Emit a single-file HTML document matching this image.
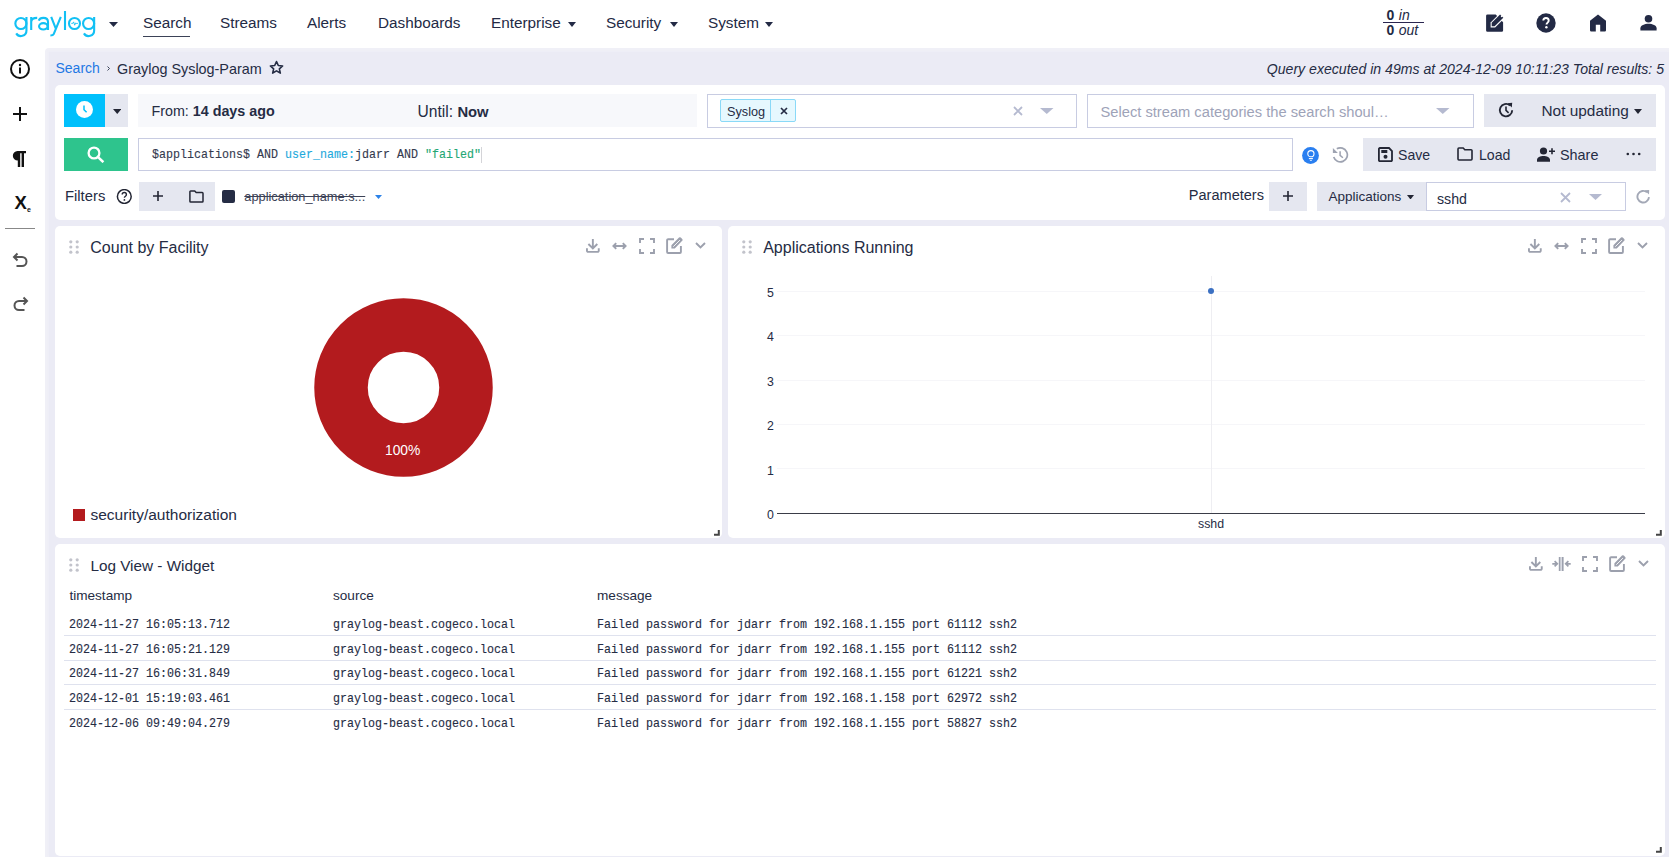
<!DOCTYPE html>
<html><head><meta charset="utf-8">
<style>
*{box-sizing:border-box}
html,body{margin:0;padding:0}
body{width:1669px;height:857px;overflow:hidden;background:#fff;font-family:"Liberation Sans",sans-serif;color:#252c44;position:relative}
.a{position:absolute;white-space:nowrap;line-height:1}
.box{position:absolute}
.nav{font-size:15.3px;top:15px;color:#232a45}
.ico{position:absolute;display:block}
.mono{font-family:"Liberation Mono",monospace;font-size:13px!important;transform:scaleX(0.8974);transform-origin:0 0;-webkit-text-stroke:0.12px currentColor}
</style></head><body>
<!-- NAVBAR -->
<div class="box" style="left:0;top:0;width:1669px;height:48px;background:#fff"></div>
<svg class="ico" style="left:0;top:0" width="100" height="40" viewBox="0 0 100 40"><g stroke="#12c0f4" stroke-width="2.1" fill="none">
<circle cx="20.9" cy="23.5" r="5.55"/><path d="M26.45 16.9V30.4A5.55 5.55 0 0 1 16.2 33.4"/>
<path d="M31.2 30V16.9M31.2 22C31.2 19 33.3 17.9 37.2 17.9"/>
<path d="M38.7 20.6C39.5 18.6 41 17.9 43.3 17.9C46.6 17.9 48 19.6 48 22V30"/><ellipse cx="43.3" cy="26.35" rx="4.25" ry="3.2"/>
<path d="M51.2 16.9L56 29.2M60.8 16.9L53.7 34.1Q53.1 35.5 50.4 35.5"/>
<path d="M65 11V30"/>
<circle cx="74.5" cy="23.5" r="5.5"/>
<circle cx="88.6" cy="23.5" r="5.55"/><path d="M94.15 16.9V30.4A5.55 5.55 0 0 1 83.9 33.4"/>
</g><path d="M71.3 23.4h1.5l.8-1.5 1.1 3.3.9-2.2.5.4h1.8" stroke="#12c0f4" stroke-width="0.9" fill="none" stroke-linejoin="round"/></svg>
<svg class="ico" style="left:109px;top:22px" width="9" height="5" viewBox="0 0 9 5"><path d="M0 0h9L4.5 5z" fill="#232a45"/></svg>
<div class="a nav" style="left:143px">Search</div>
<div class="box" style="left:143px;top:35.5px;width:47px;height:1px;background:#3b4257"></div>
<div class="a nav" style="left:220px">Streams</div>
<div class="a nav" style="left:307px">Alerts</div>
<div class="a nav" style="left:378px">Dashboards</div>
<div class="a nav" style="left:491px">Enterprise</div>
<svg class="ico" style="left:568px;top:22px" width="8" height="5" viewBox="0 0 8 5"><path d="M0 0h8L4 5z" fill="#232a45"/></svg>
<div class="a nav" style="left:606px">Security</div>
<svg class="ico" style="left:670px;top:22px" width="8" height="5" viewBox="0 0 8 5"><path d="M0 0h8L4 5z" fill="#232a45"/></svg>
<div class="a nav" style="left:708px">System</div>
<svg class="ico" style="left:765px;top:22px" width="8" height="5" viewBox="0 0 8 5"><path d="M0 0h8L4 5z" fill="#232a45"/></svg>

<!-- SIDEBAR -->
<div class="box" style="left:0;top:48px;width:45px;height:809px;background:#fff"></div>

<!-- CONTENT BG -->
<div class="box" style="left:45px;top:48px;width:1624px;height:809px;background:#f0f0f7;border-top-left-radius:4px"></div><div class="box" style="left:49px;top:52px;width:1620px;height:805px;background:#ebebf5;box-shadow:-1px -1px 2px #ededf6"></div>


<!-- NAV RIGHT -->
<div class="a" style="left:1386.5px;top:7.9px;font-size:14px;color:#232a45"><b style="font-weight:700;letter-spacing:0.6px">0</b> <i>in</i></div>
<div class="box" style="left:1383px;top:22px;width:41px;height:1px;background:#2a2650"></div>
<div class="a" style="left:1386.5px;top:23px;font-size:14px;color:#232a45"><b style="font-weight:700;letter-spacing:0.6px">0</b> <i>out</i></div>
<svg class="ico" style="left:1485px;top:12px" width="21" height="21" viewBox="0 0 21 21"><path d="M2.5 2.4H10.7L18.1 10.3V18.4a1.4 1.4 0 0 1-1.4 1.4H2.5a1.4 1.4 0 0 1-1.4-1.4V3.8a1.4 1.4 0 0 1 1.4-1.4z" fill="#232a45"/><path d="M5.6 15.4V10.4L15.1 0.9l4.75 4.75L10.1 15.4z" fill="#fff"/><path d="M6.7 14.3V10.86L15.1 2.46l3.19 3.19L9.64 14.3z" fill="#232a45"/><circle cx="16.6" cy="4.4" r="0.8" fill="#fff"/></svg>
<svg class="ico" style="left:1536px;top:13px" width="20" height="20" viewBox="0 0 20 20"><circle cx="10" cy="10" r="9.7" fill="#232a45"/><path d="M7.3 7.6a2.7 2.7 0 0 1 5.4.1c0 1.9-2.2 1.9-2.2 3.8" stroke="#fff" stroke-width="1.9" fill="none"/><circle cx="10.4" cy="14.3" r="1.2" fill="#fff"/></svg>
<svg class="ico" style="left:1589px;top:14px" width="18" height="18" viewBox="0 0 18 18"><path d="M1 6.8L9 0.5l8 6.3v9.5a1.2 1.2 0 0 1-1.2 1.2h-4.6v-6.7h-4.4v6.7H2.2A1.2 1.2 0 0 1 1 16.3z" fill="#232a45"/></svg>
<svg class="ico" style="left:1640px;top:15px" width="17" height="16" viewBox="0 0 17 16"><circle cx="8.5" cy="3.8" r="3.8" fill="#232a45"/><path d="M0.4 13.2c0-2.6 4.2-4.4 8.1-4.4s8.1 1.8 8.1 4.4v2.4H0.4z" fill="#232a45"/></svg>

<!-- SIDEBAR ICONS -->
<svg class="ico" style="left:10px;top:59px" width="20" height="20" viewBox="0 0 20 20"><circle cx="10" cy="10" r="9" stroke="#111" stroke-width="2" fill="none"/><rect x="9" y="8.5" width="2" height="6" fill="#111"/><circle cx="10" cy="6" r="1.2" fill="#111"/></svg>
<svg class="ico" style="left:13px;top:107px" width="14" height="14" viewBox="0 0 14 14"><path d="M6 0h2v6h6v2H8v6H6V8H0V6h6z" fill="#111"/></svg>
<svg class="ico" style="left:12px;top:151px" width="14" height="16" viewBox="0 0 14 16"><path d="M5.5 0H14v2.3h-2V16H9.6V2.3H8.2V16H5.8V9.6A4.8 4.8 0 0 1 5.5 0z" fill="#111"/></svg>
<div class="a" style="left:14.5px;top:194px;font-size:18.5px;font-weight:700;color:#111">X</div>
<div class="a" style="left:27px;top:206px;font-size:7px;font-weight:700;color:#111">e</div>
<div class="box" style="left:5px;top:228px;width:30px;height:1px;background:#888"></div>
<svg class="ico" style="left:12px;top:252px" width="17" height="16" viewBox="0 0 17 16"><path d="M5.5 1.5L2 5l3.5 3.5" stroke="#555" stroke-width="2" fill="none"/><path d="M2.5 5h7.5a4.5 4.5 0 0 1 0 9H4.5" stroke="#555" stroke-width="2" fill="none"/></svg>
<svg class="ico" style="left:12px;top:296px" width="17" height="16" viewBox="0 0 17 16"><path d="M11.5 1.5L15 5l-3.5 3.5" stroke="#555" stroke-width="2" fill="none"/><path d="M14.5 5H7a4.5 4.5 0 0 0 0 9h5.5" stroke="#555" stroke-width="2" fill="none"/></svg>

<!-- BREADCRUMB -->
<div class="a" style="left:55.5px;top:61px;font-size:14px;color:#1e78e4">Search</div>
<svg class="ico" style="left:107px;top:66px" width="3" height="5" viewBox="0 0 3 5"><path d="M0.5 0.5l2 2-2 2" stroke="#3a4258" stroke-width="1" fill="none"/></svg>
<div class="a" style="left:117px;top:61.5px;font-size:14.4px;color:#252c44">Graylog Syslog-Param</div>
<svg class="ico" style="left:269px;top:60px" width="15" height="15" viewBox="0 0 24 24"><path d="M12 2.5l2.9 6.3 6.9.7-5.2 4.6 1.5 6.8L12 17.4l-6.1 3.5 1.5-6.8-5.2-4.6 6.9-.7z" stroke="#252c44" stroke-width="2.6" fill="none" stroke-linejoin="round"/></svg>
<div class="a" style="right:5px;top:61.8px;font-size:14.1px;font-style:italic;color:#252c44">Query executed in 49ms at 2024-12-09 10:11:23 Total results: 5</div>

<!-- SEARCH PANEL -->
<div class="box" style="left:55px;top:85px;width:1610px;height:135px;background:#fff;border-radius:5px"></div>


<!-- ROW 1 -->
<div class="box" style="left:64px;top:94px;width:41px;height:33px;background:#00c0fc"></div>
<svg class="ico" style="left:76px;top:101px" width="17" height="17" viewBox="0 0 17 17"><circle cx="8.5" cy="8.5" r="8.5" fill="#fff"/><path d="M8 4.5v4.2l2.6 2.6" stroke="#00c0fc" stroke-width="1.5" fill="none"/></svg>
<div class="box" style="left:105px;top:94px;width:23px;height:33px;background:#e5e7f0"></div>
<svg class="ico" style="left:112.5px;top:109px" width="8.5" height="5" viewBox="0 0 8.5 5"><path d="M0 0h8.5L4.25 5z" fill="#232634"/></svg>
<div class="box" style="left:138px;top:94px;width:559px;height:33px;background:#f7f8fb"></div>
<div class="a" style="left:151.5px;top:104.1px;font-size:14.3px;color:#252c44">From: <b>14 days ago</b></div>
<div class="a" style="left:417.5px;top:104.1px;font-size:15.6px;color:#252c44">Until: <b style="font-size:14.8px">Now</b></div>
<div class="box" style="left:707px;top:94px;width:370px;height:34px;border:1px solid #c8cce2;background:#fff"></div>
<div class="box" style="left:720px;top:99px;width:76px;height:23px;border:1px solid #8ad9f7;background:#e6f8fe;border-radius:2px"></div>
<div class="box" style="left:770px;top:99px;width:1px;height:23px;background:#8ad9f7"></div>
<div class="a" style="left:727px;top:105.5px;font-size:12.7px;color:#252c44">Syslog</div>
<svg class="ico" style="left:779.5px;top:107px" width="8" height="8" viewBox="0 0 8 8"><path d="M1 1l6 6M7 1L1 7" stroke="#252c44" stroke-width="1.7"/></svg>
<svg class="ico" style="left:1013px;top:105.5px" width="10" height="10" viewBox="0 0 10 10"><path d="M1 1l8 8M9 1L1 9" stroke="#b5bad0" stroke-width="1.8"/></svg>
<svg class="ico" style="left:1040px;top:107.5px" width="13.5" height="6" viewBox="0 0 13.5 6"><path d="M0 0h13.5L6.75 6z" fill="#b5bad0"/></svg>
<div class="box" style="left:1087px;top:94px;width:387px;height:34px;border:1px solid #c8cce2;background:#fff"></div>
<div class="a" style="left:1100.5px;top:104.9px;font-size:14.7px;color:#9ea3b8">Select stream categories the search shoul…</div>
<svg class="ico" style="left:1436px;top:107.5px" width="13.5" height="6" viewBox="0 0 13.5 6"><path d="M0 0h13.5L6.75 6z" fill="#b5bad0"/></svg>
<div class="box" style="left:1484px;top:94px;width:172px;height:33px;background:#e5e7f0"></div>
<svg class="ico" style="left:1498px;top:101.5px" width="16" height="16" viewBox="0 0 16 16"><path d="M14.2 8.2A6.2 6.2 0 1 1 12 3.4" stroke="#232634" stroke-width="1.9" fill="none"/><path d="M9.6 1.2l4.6-.4-.4 4.6z" fill="#232634"/><path d="M8 4.6v3.8l2.6 2.4" stroke="#232634" stroke-width="1.6" fill="none"/></svg>
<div class="a" style="left:1541.5px;top:103px;font-size:15.4px;color:#252c44">Not updating</div>
<svg class="ico" style="left:1634.3px;top:108.5px" width="8" height="5" viewBox="0 0 8 5"><path d="M0 0h8L4 5z" fill="#232634"/></svg>

<!-- ROW 2 -->
<div class="box" style="left:64px;top:138px;width:64px;height:33px;background:#2ec48d"></div>
<svg class="ico" style="left:87px;top:146px" width="18" height="17" viewBox="0 0 18 17"><circle cx="7" cy="7" r="5.4" stroke="#fff" stroke-width="2.3" fill="none"/><path d="M10.8 10.8l5.6 5.4" stroke="#fff" stroke-width="2.5"/></svg>
<div class="box" style="left:138px;top:138px;width:1155px;height:33px;border:1px solid #c8cce2;background:#fff"></div>
<div class="a mono" style="left:151.5px;top:148.4px;font-size:11.68px;color:#343a4e">$applications$ AND <span style="color:#1ea9dc">user_name:</span>jdarr AND <span style="color:#23a774">"failed"</span></div>
<div class="box" style="left:481px;top:147px;width:1px;height:16px;background:#d4d4d8"></div>
<svg class="ico" style="left:1301.5px;top:147px" width="17" height="17" viewBox="0 0 17 17"><circle cx="8.5" cy="8.5" r="8.4" fill="#2a7ff0"/><circle cx="8.9" cy="6.7" r="3.1" stroke="#fff" stroke-width="1.1" fill="none"/><path d="M6.9 11.6h4" stroke="#fff" stroke-width="1.1"/><path d="M7.9 13.4h2" stroke="#fff" stroke-width="0.8"/></svg>
<svg class="ico" style="left:1331.5px;top:147px" width="17" height="17" viewBox="0 0 17 17"><path d="M1.7 10A7 7 0 1 0 4.8 1.84" stroke="#9ea3b1" stroke-width="1.7" fill="none"/><path d="M0.9 0.9V5.9H5.9z" fill="#9ea3b1"/><path d="M8.1 4.3V8.3L10.9 10.7" stroke="#9ea3b1" stroke-width="1.5" fill="none"/></svg>
<div class="box" style="left:1363px;top:138px;width:293px;height:33px;background:#e5e7f0"></div>
<svg class="ico" style="left:1377.5px;top:146.5px" width="15" height="15" viewBox="0 0 15 15"><path d="M1.8 1h9.2L14 4v9.2a.9.9 0 0 1-.9.9H1.8a.9.9 0 0 1-.9-.9V1.9a.9.9 0 0 1 .9-.9z" stroke="#232634" stroke-width="1.8" fill="none"/><rect x="3.3" y="3" width="6" height="3" fill="#232634"/><circle cx="7.5" cy="9.7" r="2" fill="#232634"/></svg>
<div class="a" style="left:1398px;top:148.2px;font-size:14.1px;color:#252c44">Save</div>
<svg class="ico" style="left:1457px;top:147px" width="16" height="14" viewBox="0 0 16 14"><path d="M1.9 1h4.3l1.6 1.7h6.3a.9.9 0 0 1 .9.9v8.5a.9.9 0 0 1-.9.9H1.9a.9.9 0 0 1-.9-.9V1.9a.9.9 0 0 1 .9-.9z" stroke="#232634" stroke-width="1.6" fill="none"/></svg>
<div class="a" style="left:1479px;top:148.2px;font-size:14.1px;color:#252c44">Load</div>
<svg class="ico" style="left:1537px;top:146.5px" width="18" height="15" viewBox="0 0 18 15"><circle cx="6.5" cy="4" r="3.6" fill="#232634"/><path d="M0 13c0-2.6 3.3-4 6.5-4s6.5 1.4 6.5 4v1.8H0z" fill="#232634"/><path d="M15 1.2v6M12 4.2h6" stroke="#232634" stroke-width="1.6"/></svg>
<div class="a" style="left:1560px;top:148.2px;font-size:14.4px;color:#252c44">Share</div>
<svg class="ico" style="left:1625.5px;top:152px" width="15" height="4" viewBox="0 0 15 4"><circle cx="1.8" cy="2" r="1.3" fill="#232634"/><circle cx="7.5" cy="2" r="1.3" fill="#232634"/><circle cx="13.2" cy="2" r="1.3" fill="#232634"/></svg>

<!-- ROW 3 -->
<div class="a" style="left:65px;top:189.2px;font-size:14.8px;color:#252c44">Filters</div>
<svg class="ico" style="left:116px;top:188.5px" width="17" height="15" viewBox="0 0 17 15"><circle cx="8.3" cy="7.5" r="6.9" stroke="#232634" stroke-width="1.5" fill="none"/><path d="M6.2 5.6a2.1 2.1 0 0 1 4.2.1c0 1.5-2 1.5-2 3.1" stroke="#232634" stroke-width="1.4" fill="none"/><circle cx="8.4" cy="10.9" r=".9" fill="#232634"/></svg>
<div class="box" style="left:139px;top:182px;width:76px;height:29px;background:#e5e7f0"></div>
<svg class="ico" style="left:153px;top:190.5px" width="10" height="10" viewBox="0 0 10 10"><path d="M4.2 0h1.6v4.2H10v1.6H5.8V10H4.2V5.8H0V4.2h4.2z" fill="#232634"/></svg>
<svg class="ico" style="left:188.5px;top:189.5px" width="15" height="13" viewBox="0 0 15 13"><path d="M1.7 1h4l1.5 1.6h6a.8.8 0 0 1 .8.8v7.8a.8.8 0 0 1-.8.8H1.7a.8.8 0 0 1-.8-.8V1.8a.8.8 0 0 1 .8-.8z" stroke="#232634" stroke-width="1.5" fill="none"/></svg>
<div class="box" style="left:222px;top:190px;width:13px;height:13px;background:#252c44;border-radius:2px"></div>
<div class="a" style="left:244.3px;top:190.5px;font-size:12.8px;color:#3c4256;text-decoration:line-through">application_name:s...</div>
<svg class="ico" style="left:375px;top:195px" width="7" height="4" viewBox="0 0 7 4"><path d="M0 0h7L3.5 4z" fill="#2b82e8"/></svg>
<div class="a" style="left:1188.8px;top:188.1px;font-size:14.55px;color:#252c44">Parameters</div>
<div class="box" style="left:1269px;top:182px;width:38px;height:29px;background:#e5e7f0"></div>
<svg class="ico" style="left:1283px;top:191px" width="10" height="10" viewBox="0 0 10 10"><path d="M4.2 0h1.6v4.2H10v1.6H5.8V10H4.2V5.8H0V4.2h4.2z" fill="#232634"/></svg>
<div class="box" style="left:1317px;top:182px;width:109px;height:29px;background:#e5e7f0"></div>
<div class="a" style="left:1328.5px;top:189.9px;font-size:13.5px;color:#252c44">Applications</div>
<svg class="ico" style="left:1407px;top:194.5px" width="7" height="4.5" viewBox="0 0 7 4.5"><path d="M0 0h7L3.5 4.5z" fill="#232634"/></svg>
<div class="box" style="left:1426px;top:182px;width:200px;height:29px;border:1px solid #c8cce2;background:#fff"></div>
<div class="a" style="left:1437px;top:191.6px;font-size:14.2px;color:#252c44">sshd</div>
<svg class="ico" style="left:1560px;top:191.5px" width="11" height="11" viewBox="0 0 11 11"><path d="M1 1l9 9M10 1L1 10" stroke="#b5bad0" stroke-width="1.8"/></svg>
<svg class="ico" style="left:1588.5px;top:194px" width="13" height="6" viewBox="0 0 13 6"><path d="M0 0h13L6.5 6z" fill="#b5bad0"/></svg>
<svg class="ico" style="left:1635.5px;top:188.5px" width="15" height="15" viewBox="0 0 15 15"><path d="M13 8.2A5.8 5.8 0 1 1 11 3.3" stroke="#a3a8b6" stroke-width="1.9" fill="none"/><path d="M8.6 1.2l4.6-.2-.2 4.6z" fill="#a3a8b6"/></svg>

<!-- WIDGETS -->
<div class="box" style="left:55px;top:226px;width:667px;height:312px;background:#fff;border-radius:5px"></div>
<div class="box" style="left:728px;top:226px;width:937px;height:312px;background:#fff;border-radius:5px"></div>
<div class="box" style="left:55px;top:544px;width:1610px;height:312px;background:#fff;border-radius:5px"></div>
<svg class="ico" style="left:69px;top:240px" width="10" height="14" viewBox="0 0 10 14"><circle cx="1.8" cy="1.8" r="1.6" fill="#c2c3cb"/><circle cx="1.8" cy="7" r="1.6" fill="#c2c3cb"/><circle cx="1.8" cy="12.2" r="1.6" fill="#c2c3cb"/><circle cx="8.2" cy="1.8" r="1.6" fill="#c2c3cb"/><circle cx="8.2" cy="7" r="1.6" fill="#c2c3cb"/><circle cx="8.2" cy="12.2" r="1.6" fill="#c2c3cb"/></svg><div class="a" style="left:90.3px;top:240.1px;font-size:16px;color:#252c44">Count by Facility</div><svg class="ico" style="left:586px;top:239px" width="14" height="14" viewBox="0 0 14 14"><path d="M6.85 0v9M2.4 5l4.45 4.5L11.3 5" stroke="#9ca0ad" stroke-width="1.9" fill="none"/><path d="M0.95 9.2v2.5a1.2 1.2 0 0 0 1.2 1.2h9.4a1.2 1.2 0 0 0 1.2-1.2V9.2" stroke="#9ca0ad" stroke-width="1.9" fill="none"/></svg><svg class="ico" style="left:612px;top:242px" width="15" height="8" viewBox="0 0 15 8"><path d="M1.5 4h12M4.2 1.2L1.4 4l2.8 2.8M10.8 1.2L13.6 4l-2.8 2.8" stroke="#9ca0ad" stroke-width="1.9" fill="none"/></svg><svg class="ico" style="left:639px;top:238px" width="16" height="16" viewBox="0 0 16 16"><path d="M1 5V1h4M11 1h4v4M15 11v4h-4M5 15H1v-4" stroke="#9ca0ad" stroke-width="1.9" fill="none"/></svg><svg class="ico" style="left:666px;top:237px" width="17" height="17" viewBox="0 0 17 17"><path d="M8 2.2H2.1a1 1 0 0 0-1 1V15a1 1 0 0 0 1 1h11.8a1 1 0 0 0 1-1V9" stroke="#9ca0ad" stroke-width="1.9" fill="none"/><path d="M5.4 11.6V8.2L13 .6a1.3 1.3 0 0 1 1.8 0l1.4 1.4a1.3 1.3 0 0 1 0 1.8L8.8 11.6z" fill="#9ca0ad"/><path d="M7.3 9.7L13.9 3.1" stroke="#fff" stroke-width="0.9"/></svg><svg class="ico" style="left:695px;top:242px" width="11" height="7" viewBox="0 0 11 7"><path d="M1 1l4.5 4.5L10 1" stroke="#9ca0ad" stroke-width="1.9" fill="none"/></svg><svg class="ico" style="left:314px;top:298px" width="179" height="179" viewBox="0 0 179 179"><circle cx="89.5" cy="89.5" r="62.5" stroke="#b31b1e" stroke-width="53.5" fill="none"/></svg><div class="a" style="left:385px;top:443.9px;font-size:13.8px;color:#fff">100%</div><div class="box" style="left:73px;top:509px;width:12px;height:12px;background:#b31b1e"></div><div class="a" style="left:90.5px;top:507.1px;font-size:15.5px;color:#252c44">security/authorization</div><svg class="ico" style="left:714px;top:530px" width="6" height="6" viewBox="0 0 6 6"><path d="M4.8 0v4.8H0" stroke="#444" stroke-width="2" fill="none"/></svg><svg class="ico" style="left:742px;top:240px" width="10" height="14" viewBox="0 0 10 14"><circle cx="1.8" cy="1.8" r="1.6" fill="#c2c3cb"/><circle cx="1.8" cy="7" r="1.6" fill="#c2c3cb"/><circle cx="1.8" cy="12.2" r="1.6" fill="#c2c3cb"/><circle cx="8.2" cy="1.8" r="1.6" fill="#c2c3cb"/><circle cx="8.2" cy="7" r="1.6" fill="#c2c3cb"/><circle cx="8.2" cy="12.2" r="1.6" fill="#c2c3cb"/></svg><div class="a" style="left:763.2px;top:240.4px;font-size:16px;color:#252c44">Applications Running</div><svg class="ico" style="left:1528px;top:239px" width="14" height="14" viewBox="0 0 14 14"><path d="M6.85 0v9M2.4 5l4.45 4.5L11.3 5" stroke="#9ca0ad" stroke-width="1.9" fill="none"/><path d="M0.95 9.2v2.5a1.2 1.2 0 0 0 1.2 1.2h9.4a1.2 1.2 0 0 0 1.2-1.2V9.2" stroke="#9ca0ad" stroke-width="1.9" fill="none"/></svg><svg class="ico" style="left:1554px;top:242px" width="15" height="8" viewBox="0 0 15 8"><path d="M1.5 4h12M4.2 1.2L1.4 4l2.8 2.8M10.8 1.2L13.6 4l-2.8 2.8" stroke="#9ca0ad" stroke-width="1.9" fill="none"/></svg><svg class="ico" style="left:1581px;top:238px" width="16" height="16" viewBox="0 0 16 16"><path d="M1 5V1h4M11 1h4v4M15 11v4h-4M5 15H1v-4" stroke="#9ca0ad" stroke-width="1.9" fill="none"/></svg><svg class="ico" style="left:1608px;top:237px" width="17" height="17" viewBox="0 0 17 17"><path d="M8 2.2H2.1a1 1 0 0 0-1 1V15a1 1 0 0 0 1 1h11.8a1 1 0 0 0 1-1V9" stroke="#9ca0ad" stroke-width="1.9" fill="none"/><path d="M5.4 11.6V8.2L13 .6a1.3 1.3 0 0 1 1.8 0l1.4 1.4a1.3 1.3 0 0 1 0 1.8L8.8 11.6z" fill="#9ca0ad"/><path d="M7.3 9.7L13.9 3.1" stroke="#fff" stroke-width="0.9"/></svg><svg class="ico" style="left:1637px;top:242px" width="11" height="7" viewBox="0 0 11 7"><path d="M1 1l4.5 4.5L10 1" stroke="#9ca0ad" stroke-width="1.9" fill="none"/></svg><div class="box" style="left:777px;top:290.8px;width:868px;height:1px;background:#f6f6f9"></div><div class="box" style="left:777px;top:335.2px;width:868px;height:1px;background:#f6f6f9"></div><div class="box" style="left:777px;top:379.6px;width:868px;height:1px;background:#f6f6f9"></div><div class="box" style="left:777px;top:423.9px;width:868px;height:1px;background:#f6f6f9"></div><div class="box" style="left:777px;top:468.3px;width:868px;height:1px;background:#f6f6f9"></div><div class="a" style="left:767px;top:287.0px;font-size:12.3px;color:#252c44">5</div><div class="a" style="left:767px;top:331.4px;font-size:12.3px;color:#252c44">4</div><div class="a" style="left:767px;top:375.8px;font-size:12.3px;color:#252c44">3</div><div class="a" style="left:767px;top:420.1px;font-size:12.3px;color:#252c44">2</div><div class="a" style="left:767px;top:464.5px;font-size:12.3px;color:#252c44">1</div><div class="a" style="left:767px;top:508.9px;font-size:12.3px;color:#252c44">0</div><div class="box" style="left:1211px;top:276px;width:1px;height:237px;background:#eeeef2"></div><div class="box" style="left:777px;top:512.6px;width:868px;height:1.3px;background:#3a3d48"></div><div class="box" style="left:1208px;top:288.3px;width:6px;height:6px;border-radius:50%;background:#3b70c2"></div><div class="a" style="left:1198px;top:517.5px;font-size:12.35px;color:#252c44">sshd</div><svg class="ico" style="left:1656px;top:530px" width="6" height="6" viewBox="0 0 6 6"><path d="M4.8 0v4.8H0" stroke="#444" stroke-width="2" fill="none"/></svg><svg class="ico" style="left:69px;top:558px" width="10" height="14" viewBox="0 0 10 14"><circle cx="1.8" cy="1.8" r="1.6" fill="#c2c3cb"/><circle cx="1.8" cy="7" r="1.6" fill="#c2c3cb"/><circle cx="1.8" cy="12.2" r="1.6" fill="#c2c3cb"/><circle cx="8.2" cy="1.8" r="1.6" fill="#c2c3cb"/><circle cx="8.2" cy="7" r="1.6" fill="#c2c3cb"/><circle cx="8.2" cy="12.2" r="1.6" fill="#c2c3cb"/></svg><div class="a" style="left:90.4px;top:558.3px;font-size:15.3px;color:#252c44">Log View - Widget</div><svg class="ico" style="left:1529px;top:557px" width="14" height="14" viewBox="0 0 14 14"><path d="M6.85 0v9M2.4 5l4.45 4.5L11.3 5" stroke="#9ca0ad" stroke-width="1.9" fill="none"/><path d="M0.95 9.2v2.5a1.2 1.2 0 0 0 1.2 1.2h9.4a1.2 1.2 0 0 0 1.2-1.2V9.2" stroke="#9ca0ad" stroke-width="1.9" fill="none"/></svg><svg class="ico" style="left:1552.4px;top:557px" width="19" height="14" viewBox="0 0 19 14"><rect x="8.4" y="0" width="1.6" height="14" fill="#d8dae2"/><path d="M7.6 0v14M10.8 0v14" stroke="#9ca0ad" stroke-width="1.6"/><path d="M0.3 6.8h4.6M2.6 4.2l2.7 2.6-2.7 2.6M18.7 6.8h-4.6M16.4 4.2l-2.7 2.6 2.7 2.6" stroke="#9ca0ad" stroke-width="1.7" fill="none"/></svg><svg class="ico" style="left:1582px;top:556px" width="16" height="16" viewBox="0 0 16 16"><path d="M1 5V1h4M11 1h4v4M15 11v4h-4M5 15H1v-4" stroke="#9ca0ad" stroke-width="1.9" fill="none"/></svg><svg class="ico" style="left:1609px;top:555px" width="17" height="17" viewBox="0 0 17 17"><path d="M8 2.2H2.1a1 1 0 0 0-1 1V15a1 1 0 0 0 1 1h11.8a1 1 0 0 0 1-1V9" stroke="#9ca0ad" stroke-width="1.9" fill="none"/><path d="M5.4 11.6V8.2L13 .6a1.3 1.3 0 0 1 1.8 0l1.4 1.4a1.3 1.3 0 0 1 0 1.8L8.8 11.6z" fill="#9ca0ad"/><path d="M7.3 9.7L13.9 3.1" stroke="#fff" stroke-width="0.9"/></svg><svg class="ico" style="left:1638px;top:560px" width="11" height="7" viewBox="0 0 11 7"><path d="M1 1l4.5 4.5L10 1" stroke="#9ca0ad" stroke-width="1.9" fill="none"/></svg><div class="a" style="left:69.4px;top:588.8px;font-size:13.6px;color:#252c44">timestamp</div><div class="a" style="left:333px;top:588.8px;font-size:13.6px;color:#252c44">source</div><div class="a" style="left:597px;top:588.8px;font-size:13.6px;color:#252c44">message</div><div class="a mono" style="left:69.4px;top:617.9px;color:#252c44">2024-11-27 16:05:13.712</div><div class="a mono" style="left:333px;top:617.9px;color:#252c44">graylog-beast.cogeco.local</div><div class="a mono" style="left:597px;top:617.9px;color:#252c44">Failed password for jdarr from 192.168.1.155 port 61112 ssh2</div><div class="a mono" style="left:69.4px;top:642.7px;color:#252c44">2024-11-27 16:05:21.129</div><div class="a mono" style="left:333px;top:642.7px;color:#252c44">graylog-beast.cogeco.local</div><div class="a mono" style="left:597px;top:642.7px;color:#252c44">Failed password for jdarr from 192.168.1.155 port 61112 ssh2</div><div class="a mono" style="left:69.4px;top:667.3px;color:#252c44">2024-11-27 16:06:31.849</div><div class="a mono" style="left:333px;top:667.3px;color:#252c44">graylog-beast.cogeco.local</div><div class="a mono" style="left:597px;top:667.3px;color:#252c44">Failed password for jdarr from 192.168.1.155 port 61221 ssh2</div><div class="a mono" style="left:69.4px;top:692.0px;color:#252c44">2024-12-01 15:19:03.461</div><div class="a mono" style="left:333px;top:692.0px;color:#252c44">graylog-beast.cogeco.local</div><div class="a mono" style="left:597px;top:692.0px;color:#252c44">Failed password for jdarr from 192.168.1.158 port 62972 ssh2</div><div class="a mono" style="left:69.4px;top:716.8px;color:#252c44">2024-12-06 09:49:04.279</div><div class="a mono" style="left:333px;top:716.8px;color:#252c44">graylog-beast.cogeco.local</div><div class="a mono" style="left:597px;top:716.8px;color:#252c44">Failed password for jdarr from 192.168.1.155 port 58827 ssh2</div><div class="box" style="left:64px;top:634.9px;width:1592px;height:1px;background:#dfe2ee"></div><div class="box" style="left:64px;top:659.8px;width:1592px;height:1px;background:#dfe2ee"></div><div class="box" style="left:64px;top:684.0px;width:1592px;height:1px;background:#dfe2ee"></div><div class="box" style="left:64px;top:708.7px;width:1592px;height:1px;background:#dfe2ee"></div><svg class="ico" style="left:1656px;top:847px" width="6" height="6" viewBox="0 0 6 6"><path d="M4.8 0v4.8H0" stroke="#444" stroke-width="2" fill="none"/></svg>
</body></html>
